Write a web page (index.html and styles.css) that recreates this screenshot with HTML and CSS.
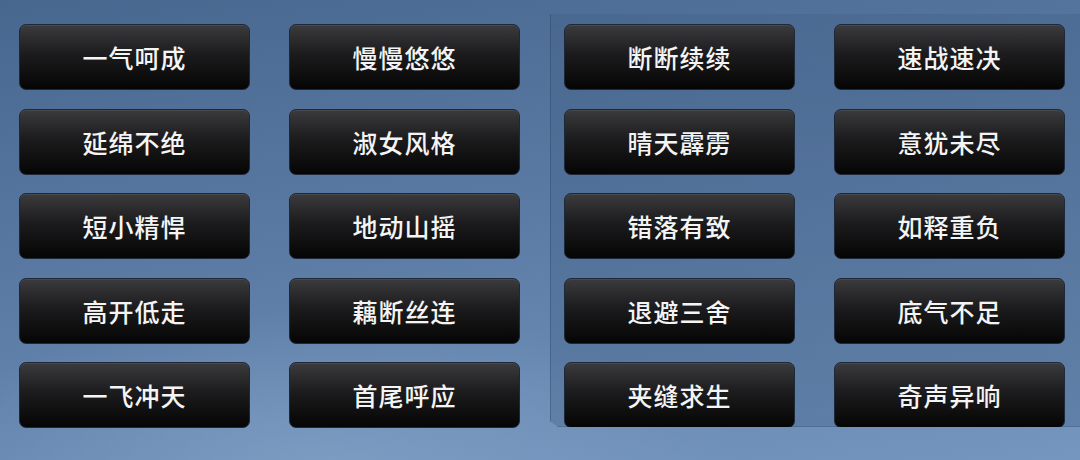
FILE: index.html
```html
<!DOCTYPE html>
<html lang="zh-CN">
<head>
    <meta charset="UTF-8">
    <title>节奏选择</title>
    <link rel="stylesheet" href="styles.css">
</head>
<body>
    <div class="stage">
        <div class="group left-group">
            <button class="tile">一气呵成</button>
            <button class="tile">慢慢悠悠</button>
            <button class="tile">延绵不绝</button>
            <button class="tile">淑女风格</button>
            <button class="tile">短小精悍</button>
            <button class="tile">地动山摇</button>
            <button class="tile">高开低走</button>
            <button class="tile">藕断丝连</button>
            <button class="tile">一飞冲天</button>
            <button class="tile">首尾呼应</button>
        </div>
        <div class="panel">
            <div class="group">
                <button class="tile">断断续续</button>
                <button class="tile">速战速决</button>
                <button class="tile">晴天霹雳</button>
                <button class="tile">意犹未尽</button>
                <button class="tile">错落有致</button>
                <button class="tile">如释重负</button>
                <button class="tile">退避三舍</button>
                <button class="tile">底气不足</button>
                <button class="tile">夹缝求生</button>
                <button class="tile">奇声异响</button>
            </div>
        </div>
    </div>
</body>
</html>
```

FILE: styles.css
```css
html, body {
    margin: 0;
    height: 100%;
}

body {
    width: 1080px;
    height: 460px;
    overflow: hidden;
    font-family: "Noto Sans CJK SC", "Noto Sans", sans-serif;
    background:
        radial-gradient(ellipse 420px 160px at 330px 470px, rgba(140, 170, 205, 0.55), rgba(140, 170, 205, 0) 100%),
        linear-gradient(170deg, #48678f 0%, #5a7aa3 45%, #7496bf 100%);
}

.stage {
    display: flex;
    height: 100%;
}

.group {
    display: grid;
    grid-template-columns: repeat(2, 231px);
    grid-auto-rows: 66px;
    column-gap: 39px;
    row-gap: 18.5px;
    align-content: start;
}

.left-group {
    padding: 24px 0 0 19px;
}

.panel {
    margin: 14px 0 0 30px;
    padding: 10px 0 0 13px;
    height: 413px;
    flex: 1;
    background: linear-gradient(180deg, rgba(50, 78, 115, 0.2), rgba(50, 78, 115, 0.28));
    border-left: 1px solid rgba(40, 62, 95, 0.35);
    border-bottom: 1px solid rgba(40, 62, 95, 0.3);
    clip-path: polygon(0 0, 100% 0, 100% 100%, 8px 100%, 0 calc(100% - 6px));
    box-sizing: border-box;
}

.tile {
    width: 231px;
    height: 66px;
    padding: 0;
    border: 1px solid #1d2838;
    border-radius: 7px;
    background: linear-gradient(180deg, #3b3b3e 0%, #1c1c1e 45%, #050505 100%);
    box-shadow: inset 0 1px 0 rgba(255, 255, 255, 0.08);
    color: #f4f4f4;
    font-family: "Noto Sans CJK SC", sans-serif;
    font-size: 25px;
    font-weight: 500;
    letter-spacing: 1px;
    box-sizing: border-box;
    cursor: pointer;
}
```
